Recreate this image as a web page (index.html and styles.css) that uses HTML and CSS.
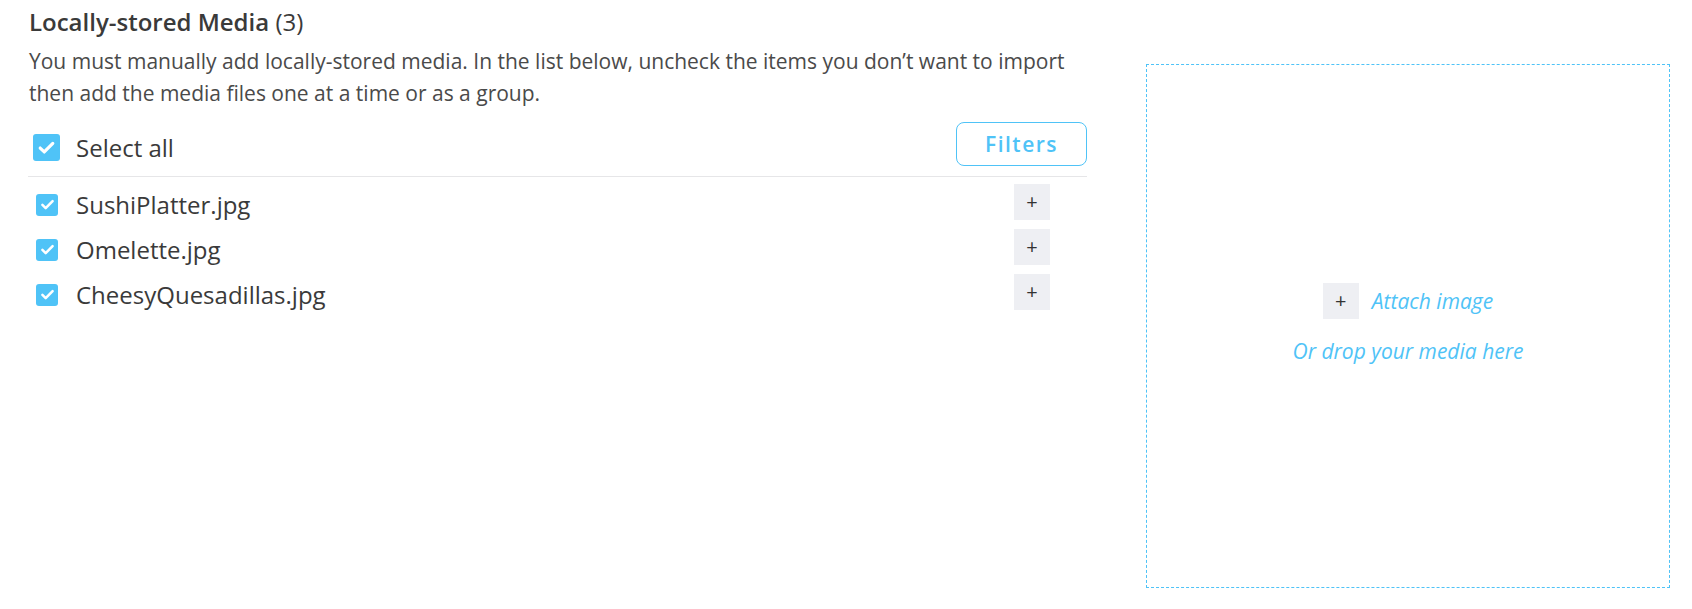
FILE: index.html
```html
<!DOCTYPE html>
<html lang="en">
<head>
  <meta charset="UTF-8" />
  <meta name="viewport" content="width=device-width, initial-scale=1" />
  <title>Locally-stored Media</title>
  <link rel="stylesheet" href="styles.css">
</head>
<body>

  <div class="page">
    <section class="media-list">
      <h2 class="title">Locally-stored Media <span class="count">(3)</span></h2>
      <p class="intro">You must manually add locally-stored media. In the list below, uncheck the items you don’t want to import then add the media files one at a time or as a group.</p>

      <div class="list-head">
        <label class="check check-large">
          <span class="box">
            <svg viewBox="0 0 16 16"><path d="M3.2 8.4l3.1 3 6.5-6.6" /></svg>
          </span>
          Select all
        </label>
        <button type="button" class="filters">Filters</button>
      </div>

      <ul class="items">
        <li class="item">
          <label class="check">
            <span class="box"><svg viewBox="0 0 16 16"><path d="M3.2 8.4l3.1 3 6.5-6.6" /></svg></span>
            SushiPlatter.jpg
          </label>
          <button type="button" class="add">+</button>
        </li>
        <li class="item">
          <label class="check">
            <span class="box"><svg viewBox="0 0 16 16"><path d="M3.2 8.4l3.1 3 6.5-6.6" /></svg></span>
            Omelette.jpg
          </label>
          <button type="button" class="add">+</button>
        </li>
        <li class="item">
          <label class="check">
            <span class="box"><svg viewBox="0 0 16 16"><path d="M3.2 8.4l3.1 3 6.5-6.6" /></svg></span>
            CheesyQuesadillas.jpg
          </label>
          <button type="button" class="add">+</button>
        </li>
      </ul>
    </section>

    <div class="dropzone">
      <div class="attach">
        <button type="button" class="add">+</button>
        <span>Attach image</span>
      </div>
      <div class="drop-hint">Or drop your media here</div>
    </div>
  </div>

</body>
</html>
```

FILE: styles.css
```css
body {
  margin: 0;
  font-family: "Open Sans", Arial, sans-serif;
  color: #3a3a3a;
  background: #fff;
}
.page {
  display: flex;
  align-items: flex-start;
  gap: 59px;
  padding: 0 0 0 28px;
}
.media-list {
  width: 1059px;
}
.title {
  margin: 6px 0 0 1px;
  font-size: 24px;
  font-weight: 600;
  line-height: 32px;
  color: #3a3a3a;
}
.count {
  font-weight: 400;
}
.intro {
  margin: 7px 0 0 1px;
  font-size: 21px;
  line-height: 32px;
  color: #4a4a4a;
}
.list-head {
  display: flex;
  align-items: center;
  justify-content: space-between;
  margin-top: 13px;
  padding-bottom: 10px;
  border-bottom: 1px solid #e6e6e8;
}
.check {
  display: flex;
  align-items: center;
  gap: 18px;
  font-size: 24px;
  color: #3a3a3a;
}
.item .check {
  margin-top: 5px;
}
.box {
  width: 22px;
  height: 22px;
  border-radius: 3px;
  background: #4fc3f7;
  display: flex;
  align-items: center;
  justify-content: center;
}
.box svg {
  width: 17px;
  height: 17px;
  fill: none;
  stroke: #fff;
  stroke-width: 2.4;
  stroke-linecap: round;
  stroke-linejoin: round;
}
.check-large {
  gap: 16px;
  margin-left: 5px;
  margin-top: 6px;
}
.check-large .box {
  width: 27px;
  height: 27px;
}
.check-large .box svg {
  width: 21px;
  height: 21px;
}
.filters {
  width: 131px;
  height: 44px;
  border: 1px solid #4fc3f7;
  border-radius: 8px;
  background: #fff;
  color: #4fc3f7;
  font-family: "Open Sans", Arial, sans-serif;
  font-size: 21px;
  font-weight: 600;
  letter-spacing: 1.5px;
  cursor: pointer;
}
.items {
  list-style: none;
  margin: 7px 0 0;
  padding: 0 37px 0 8px;
}
.item {
  display: flex;
  align-items: center;
  justify-content: space-between;
  height: 36px;
  margin-bottom: 9px;
}
.add {
  width: 36px;
  height: 36px;
  border: none;
  background: #eeeff3;
  color: #333;
  font-family: "Open Sans", Arial, sans-serif;
  font-size: 20px;
  line-height: 1;
  padding: 0;
  cursor: pointer;
}
.dropzone {
  margin-top: 64px;
  width: 524px;
  height: 524px;
  box-sizing: border-box;
  border: 1px dashed #4fc3f7;
  padding-bottom: 4px;
  display: flex;
  flex-direction: column;
  align-items: center;
  justify-content: center;
  gap: 18px;
  color: #4fc3f7;
  font-style: italic;
  font-size: 21px;
}
.attach {
  display: flex;
  align-items: center;
  gap: 13px;
}
.attach .add {
  font-style: normal;
}
```
